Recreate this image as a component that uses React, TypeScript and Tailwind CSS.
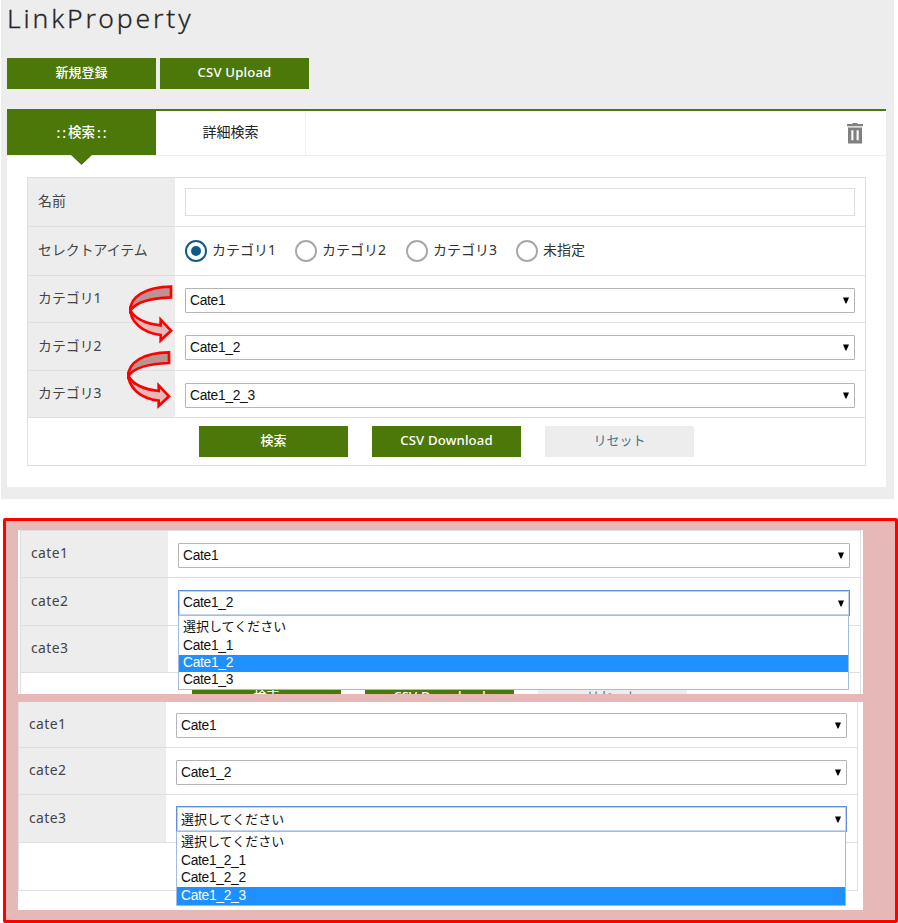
import React from 'react';

const jp = "font-['Noto_Sans','Noto_Sans_CJK_JP',sans-serif]";
const arial = "font-['Liberation_Sans','Noto_Sans_CJK_JP',sans-serif]";

function Caret() {
  return (
    <svg className="h-[7px] w-[6px] shrink-0" viewBox="0 0 6 7">
      <path d="M0 0.5H6L3.4 6.5H2.6Z" fill="#000" />
    </svg>
  );
}

type Option = { text: string; height: string; active?: boolean };

function textSize(text: string) {
  return text.startsWith('Cate') ? 'text-[13.8px] tracking-[-0.3px]' : 'text-[13px]';
}

function Select({ value, focus, options }: { value: string; focus?: boolean; options?: Option[] }) {
  return (
    <div
      className={`relative flex w-full items-center justify-between border bg-white pl-[4px] pr-[5px] leading-none text-[#111] ${arial} ${
        focus ? 'h-[26px] border-[#5f8fdc] shadow-[inset_0_0_0_1px_#c3d4f0]' : 'h-[25px] rounded-[1px] border-[#b5b5b5]'
      }`}
    >
      <span className={`whitespace-nowrap ${focus ? '' : 'pt-px'} ${textSize(value)}`}>{value}</span>
      <Caret />
      {options && (
        <div className="absolute -left-px right-0 top-full z-10 flex flex-col border border-[#a3bbe2] bg-white">
          {options.map((o) => (
            <div
              key={o.text}
              className={`flex items-center pb-px pl-1 whitespace-nowrap ${o.height} ${textSize(o.text)} ${o.active ? 'bg-[#1e90ff] text-white' : ''}`}
            >
              {o.text}
            </div>
          ))}
        </div>
      )}
    </div>
  );
}

function Row({ label, height, children, pad }: { label: string; height: string; pad: string; children?: React.ReactNode }) {
  return (
    <div className={`flex border-b border-[#dfdfdf] ${height}`}>
      <div className={`flex w-[147px] shrink-0 items-center bg-[#ededed] pb-[2px] pl-[10px] text-[13.9px] leading-none text-[#444] ${jp}`}>
        <span className={`whitespace-nowrap ${label.startsWith('cate') ? 'tracking-[0.4px]' : ''}`}>{label}</span>
      </div>
      <div className={`flex flex-1 items-start pl-[10px] pr-[10px] ${pad}`}>{children}</div>
    </div>
  );
}

function Button({ children, light }: { children: string; light?: boolean }) {
  const latin = children.startsWith('CSV');
  return (
    <button
      className={`flex h-[31px] w-[149px] items-center justify-center pb-[2px] leading-none ${jp} ${
        latin ? 'text-[13.2px] tracking-[0.15px]' : 'text-[13px]'
      } ${light ? 'bg-[#ededed] text-[#39788f]' : 'bg-[#4b7808] font-medium text-white'}`}
    >
      {children}
    </button>
  );
}

function Radio({ label, checked, width }: { label: string; checked?: boolean; width: string }) {
  return (
    <label className={`flex items-center gap-[5px] ${width}`}>
      <span
        className={`flex size-[22px] shrink-0 items-center justify-center rounded-full border-2 ${
          checked ? 'border-[#0f5b87]' : 'border-[#a8a8a8]'
        }`}
      >
        {checked && <span className="size-[10px] rounded-full bg-[#0f5b87]" />}
      </span>
      <span className={`pb-[2px] text-[14px] leading-none whitespace-nowrap text-[#333] ${jp}`}>{label}</span>
    </label>
  );
}

function CurvedArrow() {
  return (
    <g stroke="#ff0000" strokeWidth="8" strokeLinejoin="miter">
      <path d="M183 35C105 36 60 66 61 106C78 82 120 69 183 67Z" fill="#bb9393" />
      <path d="M61 94C58 142 98 173 152 180V196L183 167L152 134V151C108 146 76 133 61 106Z" fill="#e9b9b9" />
    </g>
  );
}

function TrashIcon() {
  return (
    <svg className="h-[22px] w-[18px]" viewBox="0 0 18 22">
      <path
        d="M1 2H6L7 1H11L12 2H17V4.2H1ZM2 5.6H16V21.4H2ZM5.3 8.2V18.2H7.4V8.2ZM10.6 8.2V18.2H12.7V8.2Z"
        fill="#808080"
        fillRule="evenodd"
      />
    </svg>
  );
}

export default function App() {
  return (
    <div className="relative h-[923px] w-[898px] overflow-hidden bg-white">
      <section className="ml-px flex h-[499px] w-[893px] flex-col bg-[#ededed] pl-[6px]">
        <h1 className={`h-[58px] pt-[3px] text-[26.5px] leading-[30px] font-light tracking-[2.85px] text-[#222] [-webkit-text-stroke:0.3px_#333] ${jp}`}>
          LinkProperty
        </h1>
        <div className="flex gap-[4px]">
          <Button>新規登録</Button>
          <Button>CSV Upload</Button>
        </div>
        <div className="mt-[20px] h-[378px] w-[879px] border-t-2 border-[#4b7808] bg-white">
          <div className={`flex h-[45px] items-stretch border-b border-[#eee] text-[14px] leading-none ${jp}`}>
            <div className="relative flex w-[149px] items-center justify-center bg-[#4b7808] pb-px pl-[2px] font-medium text-white">
              <span className="tracking-[2px]">::</span>
              <span className="text-[13.5px]">検索</span>
              <span className="pl-[2px] tracking-[2px]">::</span>
              <svg className="absolute top-[44px] left-[64px] h-[10px] w-[21px]" viewBox="0 0 21 10">
                <path d="M0 0H21L10.5 10Z" fill="#4b7808" />
              </svg>
            </div>
            <div className="flex w-[150px] items-center justify-center border-r border-[#eee] pb-[2px] text-[#222]">詳細検索</div>
            <div className="flex flex-1 items-center justify-end pr-[22px]">
              <TrashIcon />
            </div>
          </div>
          <div className="mt-[21px] ml-[20px] h-[289px] w-[839px] border border-[#dfdfdf]">
            <Row label="名前" height="h-[49px]" pad="pt-[10px]">
              <div className="h-[28px] w-full border border-[#dfdfdf]" />
            </Row>
            <Row label="セレクトアイテム" height="h-[49px]" pad="pt-[13px]">
              <Radio label="カテゴリ1" checked width="w-[110px]" />
              <Radio label="カテゴリ2" width="w-[111px]" />
              <Radio label="カテゴリ3" width="w-[110px]" />
              <Radio label="未指定" width="w-[110px]" />
            </Row>
            <Row label="カテゴリ1" height="h-[47px]" pad="pt-[12px]">
              <Select value="Cate1" />
            </Row>
            <Row label="カテゴリ2" height="h-[48px]" pad="pt-[12px]">
              <Select value="Cate1_2" />
            </Row>
            <Row label="カテゴリ3" height="h-[47px]" pad="pt-[12px]">
              <Select value="Cate1_2_3" />
            </Row>
            <div className="flex gap-[24px] pt-[8px] pl-[171px]">
              <Button>検索</Button>
              <Button>CSV Download</Button>
              <Button light>リセット</Button>
            </div>
          </div>
        </div>
      </section>

      <section className="mt-[19px] ml-[3px] h-[405px] w-[895px] rounded-[2px] border-[3px] border-[#ff0000] bg-[#e6b8b8] pt-[9px]">
        <div className="ml-[12px] h-[164px] w-[845px] overflow-hidden bg-white pl-[2px]">
          <div className="h-full w-[841px] border-x border-t border-[#dfdfdf]">
            <Row label="cate1" height="h-[47px]" pad="pt-[12px]">
              <Select value="Cate1" />
            </Row>
            <Row label="cate2" height="h-[48px]" pad="pt-[12px]">
              <Select
                value="Cate1_2"
                focus
                options={[
                  { text: '選択してください', height: 'h-[21px]' },
                  { text: 'Cate1_1', height: 'h-[18px]' },
                  { text: 'Cate1_2', height: 'h-[17px]', active: true },
                  { text: 'Cate1_3', height: 'h-[17px]' },
                ]}
              />
            </Row>
            <Row label="cate3" height="h-[47px]" pad="" />
            <div className="flex gap-[24px] pt-[9px] pl-[171px]">
              <Button>検索</Button>
              <Button>CSV Download</Button>
              <Button light>リセット</Button>
            </div>
          </div>
        </div>
        <div className="mt-[8px] ml-[12px] h-[208px] w-[845px] overflow-hidden bg-white">
          <div className="h-[189px] w-[840px] border-x border-b border-[#dfdfdf]">
            <Row label="cate1" height="h-[46px]" pad="pt-[11px]">
              <Select value="Cate1" />
            </Row>
            <Row label="cate2" height="h-[47px]" pad="pt-[12px]">
              <Select value="Cate1_2" />
            </Row>
            <Row label="cate3" height="h-[48px]" pad="pt-[11px]">
              <Select
                value="選択してください"
                focus
                options={[
                  { text: '選択してください', height: 'h-[20px]' },
                  { text: 'Cate1_2_1', height: 'h-[18px]' },
                  { text: 'Cate1_2_2', height: 'h-[17px]' },
                  { text: 'Cate1_2_3', height: 'h-[18px]', active: true },
                ]}
              />
            </Row>
          </div>
        </div>
      </section>

      <svg className="absolute top-[275px] left-[110px] h-[145px] w-[110px]" viewBox="0 0 330 435">
        <CurvedArrow />
        <g transform="translate(-6 197)">
          <CurvedArrow />
        </g>
      </svg>
    </div>
  );
}
